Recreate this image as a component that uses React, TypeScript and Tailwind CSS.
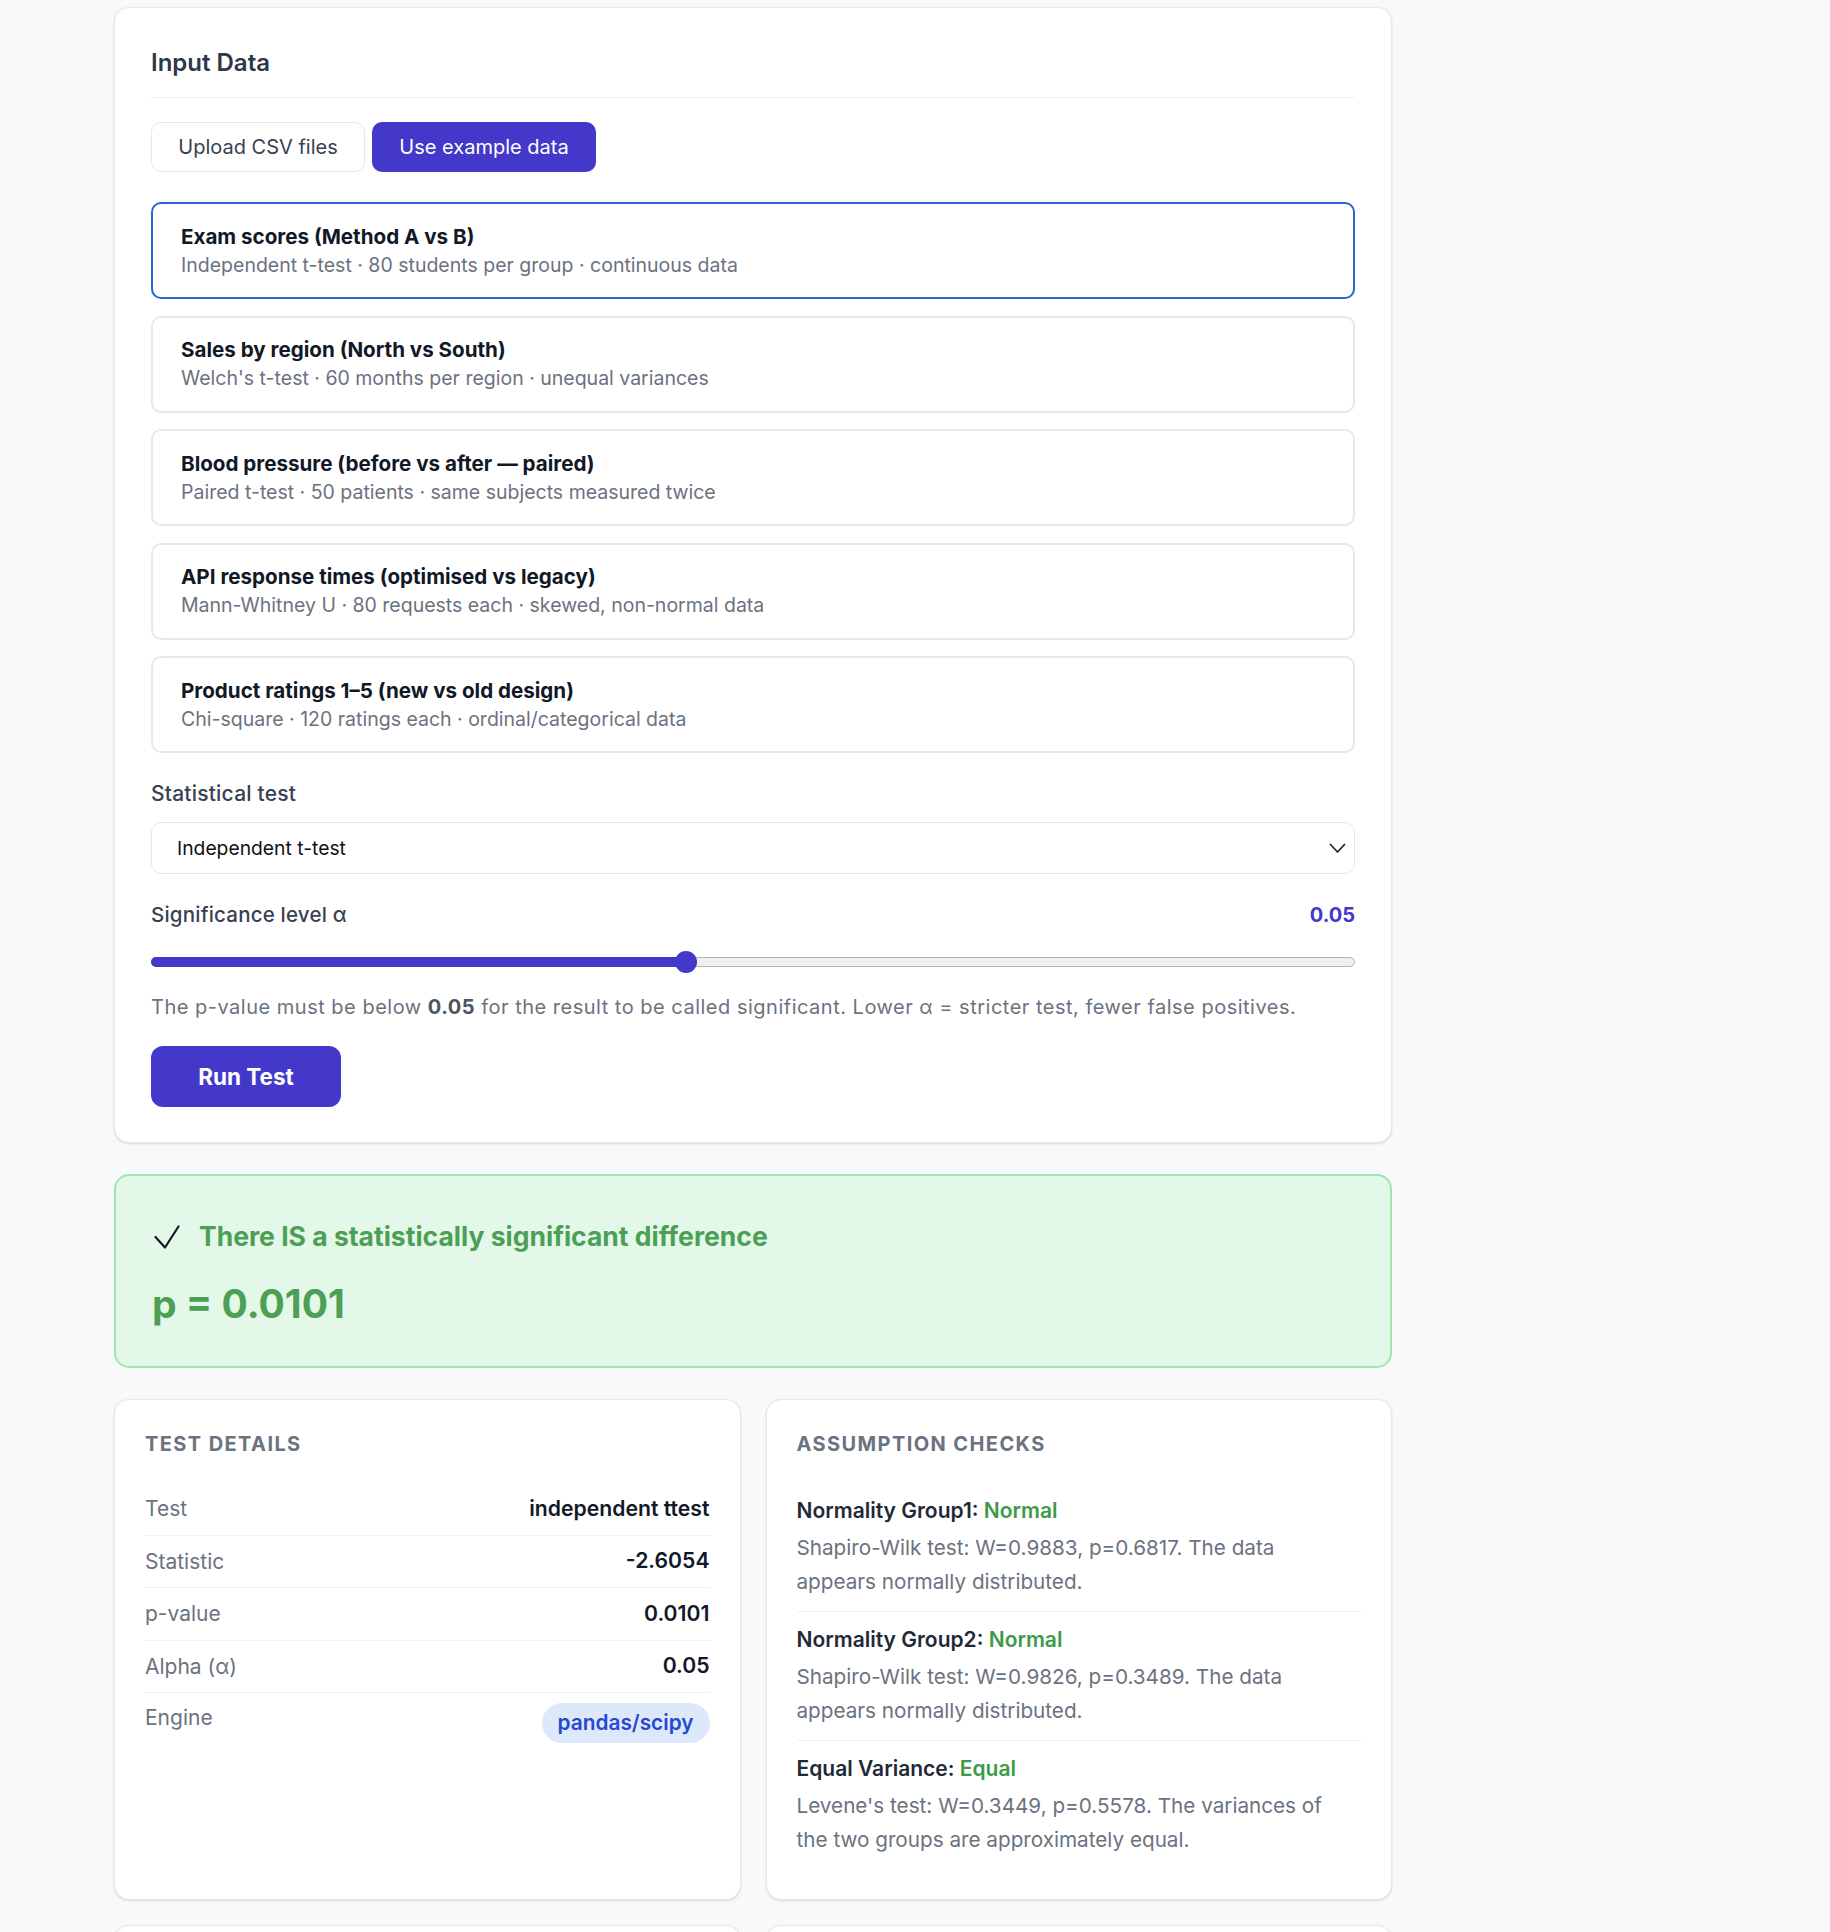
import React from 'react'

const EXAMPLES = [
  { title: 'Exam scores (Method A vs B)', desc: 'Independent t-test · 80 students per group · continuous data', active: true },
  { title: 'Sales by region (North vs South)', desc: "Welch's t-test · 60 months per region · unequal variances" },
  { title: 'Blood pressure (before vs after — paired)', desc: 'Paired t-test · 50 patients · same subjects measured twice' },
  { title: 'API response times (optimised vs legacy)', desc: 'Mann-Whitney U · 80 requests each · skewed, non-normal data' },
  { title: 'Product ratings 1–5 (new vs old design)', desc: 'Chi-square · 120 ratings each · ordinal/categorical data' },
]

const DETAILS = [
  { label: 'Test', value: 'independent ttest' },
  { label: 'Statistic', value: '-2.6054' },
  { label: 'p-value', value: '0.0101' },
  { label: 'Alpha (α)', value: '0.05' },
]

const CHECKS = [
  {
    name: 'Normality Group1:',
    result: 'Normal',
    text: 'Shapiro-Wilk test: W=0.9883, p=0.6817. The data appears normally distributed.',
  },
  {
    name: 'Normality Group2:',
    result: 'Normal',
    text: 'Shapiro-Wilk test: W=0.9826, p=0.3489. The data appears normally distributed.',
  },
  {
    name: 'Equal Variance:',
    result: 'Equal',
    text: "Levene's test: W=0.3449, p=0.5578. The variances of the two groups are approximately equal.",
  },
]

const alpha = 0.05
const alphaPct = ((alpha - 0.01) / 0.09) * 100

export default function App() {
  return (
    <div className="min-h-screen bg-[#f8f9fb] pt-[7px] pl-[114px] font-['Inter',sans-serif] text-[20px]">
      <div className="w-[1278px] flex flex-col gap-[31px]">
        {/* input card */}
        <section className="rounded-[15px] border border-[#e6e8eb] bg-white shadow-sm px-[36px] pt-[36px] pb-[35px]">
          <h2 className="text-[24px] font-semibold leading-[38px] text-[#2d3748] pb-[15px] border-b border-[#eef0f3]">
            Input Data
          </h2>

          <div className="mt-[24px] flex gap-[7px]">
            <button className="h-[50px] w-[214px] rounded-[10px] border border-[#e5e7eb] bg-white text-[20px] text-[#374151]">
              Upload CSV files
            </button>
            <button className="h-[50px] w-[224px] rounded-[10px] bg-[#4338ca] text-[20px] text-white">
              Use example data
            </button>
          </div>

          <div className="mt-[30px] flex flex-col gap-[16.5px]">
            {EXAMPLES.map((ex) => (
              <div
                key={ex.title}
                className={`h-[97px] rounded-[10px] border-2 px-[28px] flex flex-col justify-center ${ex.active ? 'border-[#2b62d9]' : 'border-[#e6e8eb]'}`}
              >
                <p className="text-[20.6px] font-bold leading-[28px] text-[#111827]">{ex.title}</p>
                <p className="text-[19.5px] leading-[28px] text-[#6b7280]">{ex.desc}</p>
              </div>
            ))}
          </div>

          <p className="mt-[26px] text-[21px] font-medium leading-[30px] tracking-[0.01em] text-[#374151]">Statistical test</p>
          <div className="mt-[13px] h-[52px] rounded-[10px] border border-[#e5e7eb] flex items-center justify-between pl-[25px] pr-[8px]">
            <span className="text-[19.3px] text-[#111111]">Independent t-test</span>
            <svg width="17" height="11" viewBox="0 0 17 11" fill="none">
              <path d="M1.5 1.5 L8.5 9 L15.5 1.5" stroke="#1f2937" strokeWidth="1.8" strokeLinecap="round" strokeLinejoin="round" />
            </svg>
          </div>

          <div className="mt-[26px] flex items-center justify-between leading-[30px]">
            <span className="text-[20.5px] font-medium tracking-[0.01em] text-[#374151]">Significance level α</span>
            <span className="text-[20px] font-bold text-[#4338ca]">0.05</span>
          </div>

          <div className="mt-[21px] relative h-[22px]">
            <div className="absolute left-0 right-0 top-[6px] h-[10px] rounded-full border border-[#b4b4b4] bg-[#efefef]" />
            <div
              className="absolute left-0 top-[6px] h-[10px] rounded-full bg-[#4338ca]"
              style={{ width: `${alphaPct}%` }}
            />
            <div
              className="absolute top-0 h-[22px] w-[22px] -ml-[11px] rounded-full bg-[#4338ca]"
              style={{ left: `${alphaPct}%` }}
            />
          </div>

          <p className="mt-[19px] text-[20px] leading-[30px] tracking-[0.025em] text-[#6b7280]">
            The p-value must be below <b className="font-bold text-[#4b5563]">0.05</b> for the result to be called
            significant. Lower α = stricter test, fewer false positives.
          </p>

          <button className="mt-[24px] h-[61px] w-[190px] rounded-[12px] bg-[#4338ca] text-[22.5px] font-bold text-white">
            Run Test
          </button>
        </section>

        {/* result banner */}
        <section className="rounded-[15px] border-2 border-[#9fe6b0] bg-[#e3f8e8] px-[36px] pt-[42px] pb-[40px]">
          <div className="flex items-center gap-[19px] h-[38px]">
            <svg className="ml-[2px]" width="26" height="24" viewBox="0 0 26 24" fill="none">
              <path d="M1.5 12 L11 22.5 L24.5 1.5" stroke="#111827" strokeWidth="2.2" strokeLinecap="round" strokeLinejoin="round" />
            </svg>
            <span className="text-[26.5px] font-bold text-[#4c9f55]">There IS a statistically significant difference</span>
          </div>
          <p className="mt-[25px] text-[39px] font-bold leading-[45px] text-[#4c9f55]">p = 0.0101</p>
        </section>

        {/* details */}
        <div className="grid grid-cols-2 gap-[25px]">
          <section className="rounded-[15px] border border-[#e6e8eb] bg-white shadow-sm p-[30px]">
            <h3 className="text-[20px] font-bold uppercase tracking-[0.07em] leading-[28px] text-[#6b7280]">Test Details</h3>
            <div className="mt-[25px]">
              {DETAILS.map((d) => (
                <div key={d.label} className="h-[52.5px] flex items-center justify-between border-b border-[#f0f1f3]">
                  <span className="text-[21px] text-[#6b7280]">{d.label}</span>
                  <span className="text-[21.2px] font-semibold text-[#111827]">{d.value}</span>
                </div>
              ))}
              <div className="pt-[10px] flex items-start justify-between">
                <span className="text-[21px] leading-[30px] text-[#6b7280]">Engine</span>
                <span className="h-[40px] px-[16px] rounded-full bg-[#dde8fb] flex items-center text-[20.8px] font-semibold text-[#2647d1]">
                  pandas/scipy
                </span>
              </div>
            </div>
          </section>

          <section className="rounded-[15px] border border-[#e6e8eb] bg-white shadow-sm p-[30px]">
            <h3 className="text-[20px] font-bold uppercase tracking-[0.07em] leading-[28px] text-[#6b7280]">Assumption Checks</h3>
            <div className="mt-[24.5px]">
              {CHECKS.map((c, i) => (
                <div
                  key={c.name}
                  className={`pt-[13.5px] pb-[12.5px] flex flex-col gap-[5px] ${i < CHECKS.length - 1 ? 'border-b border-[#eef0f3]' : ''}`}
                >
                  <p className="text-[21px] font-semibold leading-[30px] text-[#1f2937]">
                    {c.name} <span className="text-[#3d9b47]">{c.result}</span>
                  </p>
                  <p className="pr-[14px] text-[20.7px] leading-[33.6px] text-[#6b7280]">{c.text}</p>
                </div>
              ))}
            </div>
          </section>

          <section className="h-[300px] rounded-[15px] border border-[#e6e8eb] bg-white shadow-sm" />
          <section className="h-[300px] rounded-[15px] border border-[#e6e8eb] bg-white shadow-sm" />
        </div>
      </div>
    </div>
  )
}
